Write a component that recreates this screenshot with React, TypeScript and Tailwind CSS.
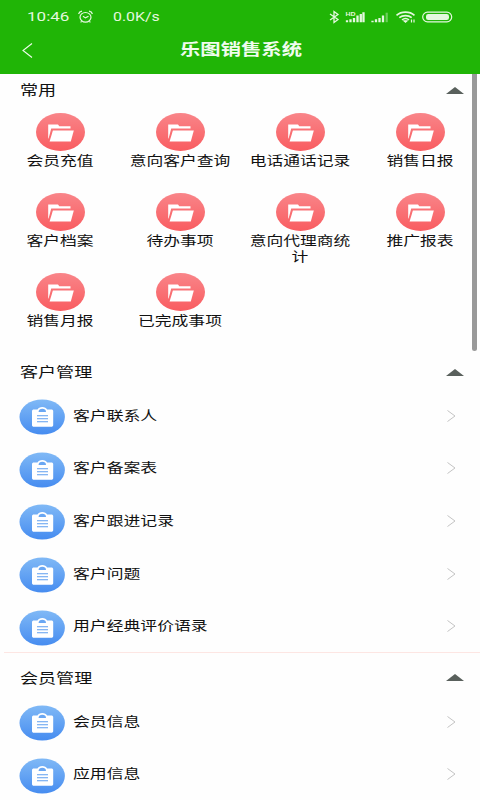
import { useState } from "react"

const shortcuts = [
  "会员充值",
  "意向客户查询",
  "电话通话记录",
  "销售日报",
  "客户档案",
  "待办事项",
  "意向代理商统计",
  "推广报表",
  "销售月报",
  "已完成事项",
]

const customerItems = ["客户联系人", "客户备案表", "客户跟进记录", "客户问题", "用户经典评价语录"]
const memberItems = ["会员信息", "应用信息"]

function FolderIcon() {
  return (
    <svg width="49" height="38" viewBox="0 0 49 38" className="shrink-0">
      <defs>
        <linearGradient id="folderBg" x1="0" y1="0" x2="0" y2="1">
          <stop offset="0" stopColor="#f98589" />
          <stop offset="1" stopColor="#f95c60" />
        </linearGradient>
      </defs>
      <ellipse cx="24.5" cy="19" rx="24.5" ry="19" fill="url(#folderBg)" />
      <path d="M12.2 25.500V11.400h9.800l1.300 1.900h11.200v2.200H15.200l-2.600 10z" fill="#fff" />
      <path d="M16.900 17.400h20.900l-3 11.100H13.600z" fill="#fff" />
    </svg>
  )
}

function ClipboardIcon() {
  return (
    <svg width="46" height="36" viewBox="0 0 46 36" className="shrink-0">
      <defs>
        <linearGradient id="clipBg" x1="0" y1="0" x2="0" y2="1">
          <stop offset="0" stopColor="#80b9f6" />
          <stop offset="1" stopColor="#468cf0" />
        </linearGradient>
      </defs>
      <ellipse cx="23.200" cy="18" rx="22.700" ry="17.600" fill="url(#clipBg)" />
      <path d="M15 10.500h3.500c.8-1.700 2.400-2.600 4.800-2.600s4 .9 4.800 2.600h4.100c1.300 0 2 .6 2 1.500v14.200c0 .9-.7 1.500-2 1.500H15c-1.300 0-2-.6-2-1.500V12c0-.9.7-1.500 2-1.500z" fill="#fff" />
      <path d="M19.600 12.900c0-2 1.500-3.200 3.700-3.200s3.700 1.200 3.700 3.200z" fill="#6aa7f3" />
      <path d="M18 16.800h11M18 19.800h11M18 22.800h11" stroke="#5f9ff0" strokeWidth="1.100" />
    </svg>
  )
}

function StatusBar() {
  return (
    <div className="flex h-[34px] items-center text-[#e4f8df]">
      <span className="ml-[27px] w-[51px] text-[13px]">
        <span className="inline-block origin-left scale-x-[1.31]">10:46</span>
      </span>
      <svg width="16" height="14" viewBox="0 0 16 14" fill="none" stroke="currentColor" strokeWidth="1.200">
        <ellipse cx="7.500" cy="7.300" rx="5.500" ry="4.800" />
        <path d="M.6 4C1 2.400 2.300 1.400 4 1.100M14.400 4C14 2.400 12.700 1.400 11 1.100M5 6.300l2.500 1.600 3-1.600M3.600 11.300l-1 1M11.400 11.300l1 1" />
      </svg>
      <span className="ml-[19px] text-[12.5px]">
        <span className="inline-block origin-left scale-x-[1.27]">0.0K/s</span>
      </span>

      <div className="mr-[27px] ml-auto flex items-center">
        <svg width="124" height="16" viewBox="0 0 124 16" fill="none" stroke="currentColor">
          <path d="M1 5l8 5.500-4 3v-11l4 3L1 11" strokeWidth="1.300" />
          <text x="16.500" y="6.500" fontSize="6" fontWeight="700" fill="currentColor" stroke="none" textLength="10" lengthAdjust="spacingAndGlyphs" fontFamily="Liberation Sans, sans-serif">HD</text>
          <path d="M18 13.200v-2M21.500 13.200v-3M25 13.200V9M28.500 13.200V6.500M31.800 13.200V5M34.500 13.200V3.200" strokeWidth="2.300" />
          <path d="M43.500 13.200v-1.500M47 13.200v-3M50.500 13.200V9M54 13.200V6.500" strokeWidth="2.300" />
          <path d="M57.700 13.200V3.700" strokeWidth="2.200" opacity=".4" />
          <path d="M67.500 6.300c4.800-4.200 13.200-4.200 18 0M70.300 8.700c3.400-2.800 9-2.800 12.400 0M73 10.900c2-1.600 5-1.600 7 0" strokeWidth="1.600" />
          <path d="M74.500 11.800l2 1.700 2-1.700z" fill="currentColor" />
          <path d="M82.500 10.500v3M85 10.500v3" strokeWidth="1.200" />
          <rect x="93.700" y="3.200" width="29" height="9.600" rx="4.800" strokeWidth="1.200" />
          <rect x="97" y="4.900" width="23" height="6.200" rx="2.300" fill="currentColor" stroke="none" />
        </svg>
      </div>
    </div>
  )
}

type SectionTitleProps = {
  title: string
  onToggle: () => void
}

function SectionTitle({ title, onToggle }: SectionTitleProps) {
  return (
    <button onClick={onToggle} className="flex w-full items-center justify-between pr-4 pl-[19.5px] text-left">
      <span className="origin-left scale-x-[1.29] text-[14px] leading-5">{title}</span>
      <svg width="18" height="7" viewBox="0 0 18 7">
        <path d="M0 7L9 0l9 7z" fill="#59605c" />
      </svg>
    </button>
  )
}

function ItemList({ items }: { items: string[] }) {
  return (
    <ul>
      {items.map((item) => (
        <li key={item} className="flex h-[52.6px] items-center pr-6 pl-[19px]">
          <div className="pt-1">
            <ClipboardIcon />
          </div>
          <span className="ml-[7.5px] origin-left scale-x-[1.295] pt-px text-[13px] leading-5">{item}</span>
          <svg width="9" height="12" viewBox="0 0 9 12" fill="none" stroke="#c3c3c3" className="mt-px ml-auto">
            <path d="M.5.500L8 6 .5 11.500" />
          </svg>
        </li>
      ))}
    </ul>
  )
}

export default function App() {
  const [open, setOpen] = useState({ common: true, customer: true, member: true })

  const toggle = (key: "common" | "customer" | "member") => {
    setOpen({ ...open, [key]: !open[key] })
  }

  return (
    <div className="relative h-[800px] w-[480px] overflow-hidden bg-[#fefefe] font-['Roboto','Noto_Sans_CJK_SC',sans-serif] text-[#111]">
      <header className="h-[74px] bg-[#20b506]">
        <StatusBar />
        <div className="flex h-8 items-center px-[22px] text-[#f0fcee]">
          <svg width="11" height="15" viewBox="0 0 11 15" fill="none" stroke="currentColor" strokeWidth="1.100">
            <path d="M10 .5L1 7.500l9 7" />
          </svg>
          <h1 className="mr-[9px] flex-1 text-center text-[16px] font-bold">
            <span className="inline-block scale-x-[1.27]">乐图销售系统</span>
          </h1>
        </div>
      </header>

      <section className="h-[273px] pt-1.5">
        <SectionTitle title="常用" onToggle={() => toggle("common")} />
        {open.common && (
          <div className="mt-[13px] grid grid-cols-4">
            {shortcuts.map((name) => (
              <div key={name} className="flex h-20 flex-col items-center">
                <FolderIcon />
                <span className="mt-0.5 w-20 scale-x-[1.29] text-center text-[13px] leading-[15.5px]">{name}</span>
              </div>
            ))}
          </div>
        )}
      </section>

      <section>
        <div className="h-[42px] pt-[15px]">
          <SectionTitle title="客户管理" onToggle={() => toggle("customer")} />
        </div>
        {open.customer && <ItemList items={customerItems} />}
        <div className="ml-1 h-px bg-[#fde6e3]" />
      </section>

      <section>
        <div className="h-[42px] pt-[15px]">
          <SectionTitle title="会员管理" onToggle={() => toggle("member")} />
        </div>
        {open.member && <ItemList items={memberItems} />}
      </section>

      <div className="absolute top-[74px] right-[3px] h-[277px] w-[5px] rounded-b-sm bg-[#999]" />
    </div>
  )
}
